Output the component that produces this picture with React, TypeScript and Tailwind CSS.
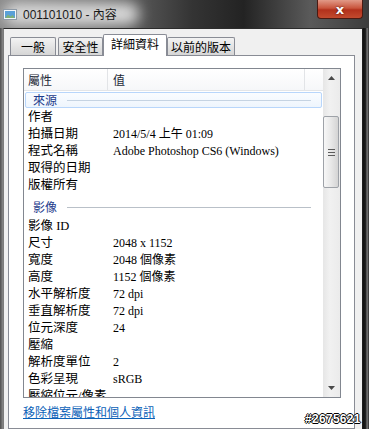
import type { ReactNode } from 'react';

const sourceRows = [
  { name: '作者', value: '' },
  { name: '拍攝日期', value: '2014/5/4 上午 01:09' },
  { name: '程式名稱', value: 'Adobe Photoshop CS6 (Windows)' },
  { name: '取得的日期', value: '' },
  { name: '版權所有', value: '' },
];

const imageRows = [
  { name: '影像 ID', value: '' },
  { name: '尺寸', value: '2048 x 1152' },
  { name: '寬度', value: '2048 個像素' },
  { name: '高度', value: '1152 個像素' },
  { name: '水平解析度', value: '72 dpi' },
  { name: '垂直解析度', value: '72 dpi' },
  { name: '位元深度', value: '24' },
  { name: '壓縮', value: '' },
  { name: '解析度單位', value: '2' },
  { name: '色彩呈現', value: 'sRGB' },
  { name: '壓縮位元/像素', value: '' },
];

function Row({ name, value }: { name: string; value: string }) {
  return (
    <div className="flex h-[17px] items-center whitespace-nowrap text-black">
      <div className="w-[89px] pl-[4px] text-[12.5px]">{name}</div>
      <div className="text-[12px]">{value}</div>
    </div>
  );
}

function Group({ label, hot, children }: { label: string; hot?: boolean; children?: ReactNode }) {
  return (
    <div className={hot ? 'pt-[1px] pb-[1px]' : 'pt-[5px] pb-[3px]'}>
      <div
        className={`ml-[1px] mr-[1px] flex h-[16px] items-center rounded-[2px] pl-[7px] pr-[10px] border ${
          hot ? 'border-[#b8d6fb] bg-[linear-gradient(180deg,#fafcff,#eef5fd)]' : 'border-transparent'
        }`}
      >
        <span className="font-['Noto_Sans_CJK_TC',sans-serif] text-[12px] leading-[14px] text-[#1e3c8c]">{label}</span>
        <div className={`ml-[10px] h-px flex-1 ${hot ? 'bg-[#c5d3e2]' : 'bg-[#b9c0c8]'}`} />
        {children}
      </div>
    </div>
  );
}

function Arrow({ down }: { down?: boolean }) {
  return (
    <svg width="7" height="4" viewBox="0 0 7 4">
      <path d={down ? 'M0 0 H7 L3.5 4 Z' : 'M0 4 H7 L3.5 0 Z'} fill="#4a4a4a" />
    </svg>
  );
}

function Tab({ label, width, selected }: { label: string; width: string; selected?: boolean }) {
  if (selected) {
    return (
      <div
        className={`${width} relative z-10 -mb-px flex h-[22px] items-center justify-center rounded-t-[2px] border border-b-0 border-[#898c95] bg-white pb-[3px]`}
      >
        {label}
      </div>
    );
  }
  return (
    <div
      className={`${width} flex h-[18px] items-center justify-center rounded-t-[2px] border border-b-0 border-[#898c95] bg-[linear-gradient(180deg,#f3f3f3,#e4e4e4_50%,#d6d6d6)]`}
    >
      {label}
    </div>
  );
}

export default function App() {
  return (
    <div className="relative flex h-[429px] w-[369px] flex-col overflow-hidden bg-[#2a2a2a]">
      {/* Title bar */}
      <div className="relative h-[28px] shrink-0 overflow-hidden bg-[linear-gradient(90deg,#8a8a8a_0%,#6e6e6e_28%,#343434_52%,#232323_66%,#5a5a5a_84%,#3c3c3c_100%)]">
        <div className="absolute left-[4px] top-[3px] h-[22px] w-[135px] rounded-full bg-[#dadada] blur-[7px]" />
        <div className="relative flex h-full items-center pl-[3px] pt-[1px]">
          <svg width="14" height="11" viewBox="0 0 14 11" className="mr-[6px]">
            <rect x="0.5" y="0.5" width="13" height="10" fill="#f4f7fa" stroke="#8e9aa6" />
            <rect x="2" y="2" width="10" height="7" fill="#5aa0d8" />
            <path d="M2 9 L5 5.5 L7.5 7.5 L9.5 6 L12 9 Z" fill="#7fb07a" />
          </svg>
          <span className="font-['Liberation_Sans','Noto_Sans_CJK_TC',sans-serif] text-[12px] leading-[14px] text-[#1a1a1a]">
            001101010 - 內容
          </span>
        </div>
        <div className="absolute left-[317px] top-0 flex h-[19px] w-[46px] items-center justify-center rounded-b-[4px] border border-t-0 border-[#4a1a12] bg-[linear-gradient(180deg,#e19a88_0%,#c9553d_45%,#b2311c_55%,#c24a2e_100%)]">
          <span className="font-['DejaVu_Sans',sans-serif] text-[13px] font-bold leading-none text-white [text-shadow:0_0_2px_#3a0a00]">
            x
          </span>
        </div>
      </div>

      {/* Window body */}
      <div className="flex flex-1">
        <div className="w-[3px] bg-[linear-gradient(90deg,#4e4e4e,#8a8a8a)]" />
        <div className="flex flex-1 flex-col border-l border-t border-r border-l-[#7c7c7c] border-t-[#2c2c2c] border-r-[#1e1e1e] bg-[#f0f0f0] pl-[4px] pr-[7px] pt-[5px]">
          {/* Tabs */}
          <div className="flex items-end pl-[2px] font-['Noto_Sans_CJK_TC',sans-serif] text-[12px] leading-[14px] text-black">
            <Tab label="一般" width="w-[46px]" />
            <div className="w-[2px]" />
            <Tab label="安全性" width="w-[45px]" />
            <Tab label="詳細資料" width="w-[64px]" selected />
            <Tab label="以前的版本" width="w-[68px]" />
          </div>

          {/* Tab panel */}
          <div className="flex flex-1 flex-col border border-[#898c95] bg-white pl-[14px] pt-[12px]">
            <div className="flex h-[330px] w-[318px] border border-[#828790] font-['Liberation_Serif','Noto_Sans_CJK_TC',serif] text-[13px] leading-[17px]">
              <div className="flex w-[299px] flex-col">
                {/* Column header */}
                <div className="flex h-[22px] shrink-0 items-center border-b border-[#e3e5e8] bg-[linear-gradient(180deg,#ffffff,#f6f7f9)] font-['Noto_Sans_CJK_TC',sans-serif] text-[12px] text-[#1e2a38]">
                  <div className="flex h-full w-[83px] items-center pl-[4px]">屬性</div>
                  <div className="h-full w-px bg-[#e2e4e7]" />
                  <div className="flex h-full w-[196px] items-center pl-[5px]">值</div>
                  <div className="h-full w-px bg-[#e2e4e7]" />
                </div>
                {/* Items */}
                <div className="flex-1 overflow-hidden">
                  <Group label="來源" hot />
                  {sourceRows.map((r) => (
                    <Row key={r.name} name={r.name} value={r.value} />
                  ))}
                  <Group label="影像" />
                  {imageRows.map((r) => (
                    <Row key={r.name} name={r.name} value={r.value} />
                  ))}
                </div>
              </div>

              {/* Scrollbar */}
              <div className="flex w-[17px] flex-col bg-[linear-gradient(90deg,#e6e6e6,#f1f1f1_40%,#ebebeb)]">
                <div className="flex h-[17px] items-center justify-center pt-[1px]">
                  <Arrow />
                </div>
                <div className="flex-1 pt-[30px]">
                  <div className="flex h-[72px] w-[16px] items-center justify-center rounded-[2px] border border-[#9ea2a8] bg-[linear-gradient(90deg,#f7f7f7,#e8e8e8_50%,#d4d4d4)]">
                    <div className="flex flex-col gap-[2px]">
                      <div className="h-px w-[7px] bg-[#5c5c5c]" />
                      <div className="h-px w-[7px] bg-[#5c5c5c]" />
                      <div className="h-px w-[7px] bg-[#5c5c5c]" />
                    </div>
                  </div>
                </div>
                <div className="flex h-[17px] items-center justify-center pb-[1px]">
                  <Arrow down />
                </div>
              </div>
            </div>

            <div className="mt-[7px] font-['Noto_Sans_CJK_TC',sans-serif] text-[12px] leading-[14px] text-[#0b62b8] underline">
              移除檔案屬性和個人資訊
            </div>
          </div>
        </div>
        <div className="w-[6px] bg-[linear-gradient(90deg,#111111,#1c1c1c_40%,#7a7a7a_70%,#2a2a2a)]" />
      </div>

      {/* Watermark */}
      <div className="absolute left-[305px] top-[412px] font-['Liberation_Sans',sans-serif] text-[12px] font-bold leading-[14px] tracking-[0.3px] text-white [text-shadow:-1px_0_0_#000,1px_0_0_#000,0_-1px_0_#000,0_1px_0_#000]">
        #2675621
      </div>
    </div>
  );
}
